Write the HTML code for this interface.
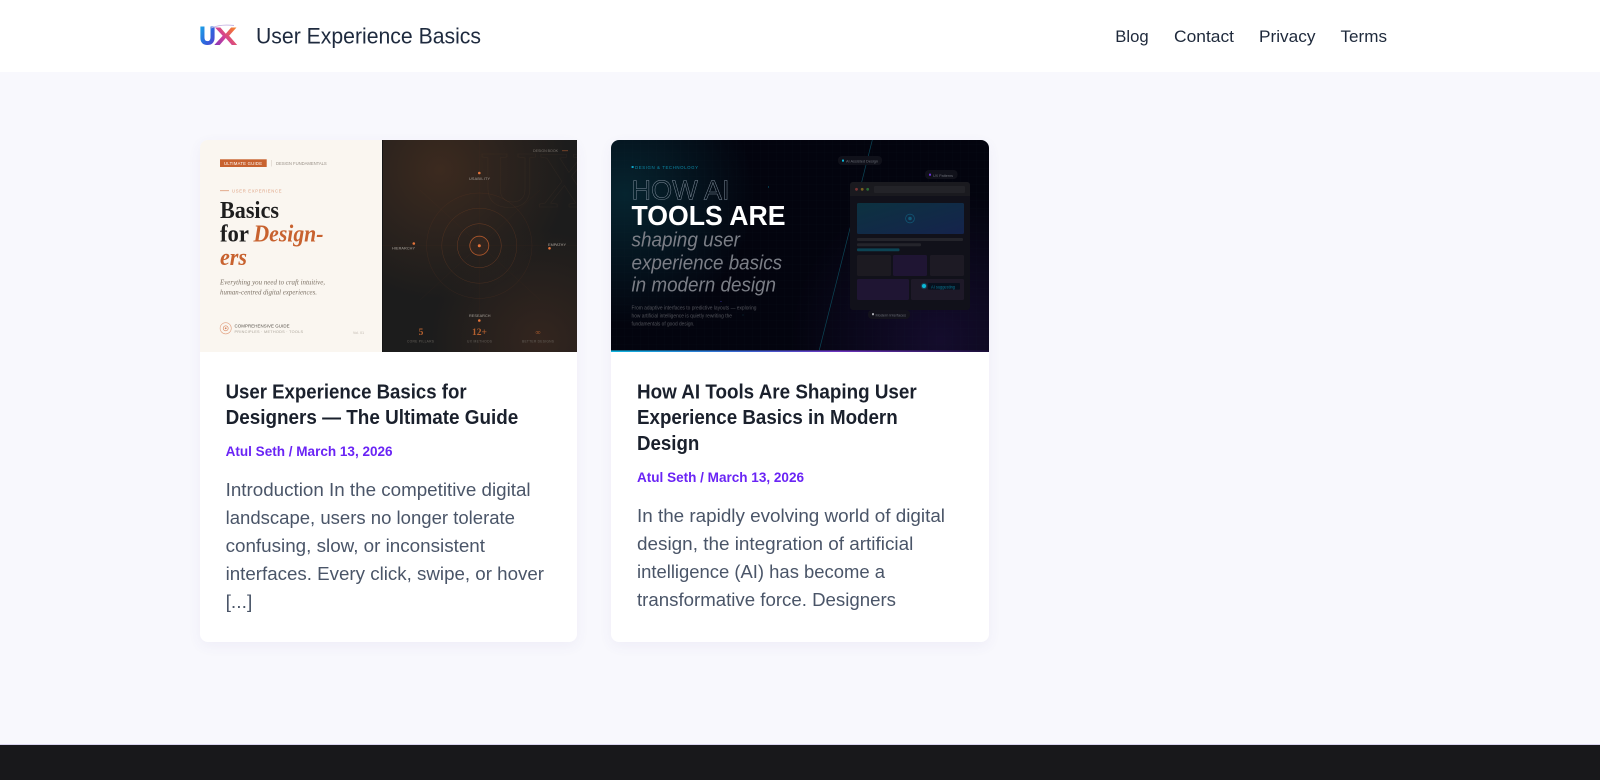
<!DOCTYPE html>
<html lang="en">
<head>
<meta charset="utf-8">
<title>User Experience Basics</title>
<style>
html,body{margin:0;padding:0;width:1600px;height:780px;overflow:hidden;background:#f8f8fd;font-family:"Liberation Sans",sans-serif}
.hd{position:absolute;left:0;top:0;width:1600px;height:72px;background:#fff}
.card{position:absolute;top:140px;height:502px;background:#fff;border-radius:8px;box-shadow:0 4px 14px rgba(80,70,160,.06)}
.ft{position:absolute;left:0;top:744px;width:1600px;height:36px;background:#18181b;border-top:1px solid #d9d4ee;box-sizing:border-box}
svg{position:absolute;left:0;top:0}
text{font-family:"Liberation Sans",sans-serif}
.s{font-family:"Liberation Serif",serif}
.nav{font-size:16.6px;fill:#1e293b}
.t{font-size:20.6px;font-weight:700;fill:#1a202c}
.m{font-size:13.4px;font-weight:700;fill:#6a24f5}
.e{font-size:18px;fill:#4a5568}
.b{filter:blur(.35px)}
</style>
</head>
<body>
<div class="hd"></div>
<div class="card" style="left:200px;width:377px"></div>
<div class="card" style="left:611px;width:378px"></div>
<div class="ft"></div>
<svg width="1600" height="780" viewBox="0 0 1600 780" xmlns="http://www.w3.org/2000/svg">
<defs>
<linearGradient id="lu" x1="0" y1="0" x2="1" y2="1">
<stop offset="0" stop-color="#18b0e8"/><stop offset=".55" stop-color="#2f62dc"/><stop offset="1" stop-color="#6a35c8"/>
</linearGradient>
<linearGradient id="lx" x1="0" y1="1" x2="1" y2="0">
<stop offset="0" stop-color="#6a35c8"/><stop offset=".45" stop-color="#d23f96"/><stop offset=".75" stop-color="#f0703f"/><stop offset="1" stop-color="#f7a72a"/>
</linearGradient>
<clipPath id="c1"><path d="M200 352V148a8 8 0 0 1 8-8H577V352Z"/></clipPath>
<clipPath id="c1b"><path d="M382 352V140H569a8 8 0 0 1 8 8V352Z"/></clipPath>
<clipPath id="c2"><path d="M611 352V148a8 8 0 0 1 8-8H981a8 8 0 0 1 8 8V352Z"/></clipPath>
<radialGradient id="br1" gradientUnits="userSpaceOnUse" cx="440" cy="170" r="130"><stop offset="0" stop-color="#3c2a1f"/><stop offset="1" stop-color="#3c2a1f" stop-opacity="0"/></radialGradient>
<radialGradient id="br2" gradientUnits="userSpaceOnUse" cx="540" cy="340" r="110"><stop offset="0" stop-color="#33251e"/><stop offset="1" stop-color="#33251e" stop-opacity="0"/></radialGradient>
<radialGradient id="te" gradientUnits="userSpaceOnUse" cx="625" cy="195" r="130"><stop offset="0" stop-color="#06242f"/><stop offset="1" stop-color="#06242f" stop-opacity="0"/></radialGradient>
<radialGradient id="pu" gradientUnits="userSpaceOnUse" cx="940" cy="340" r="150"><stop offset="0" stop-color="#140c2c"/><stop offset="1" stop-color="#140c2c" stop-opacity="0"/></radialGradient>
<linearGradient id="acc" x1="0" x2="1"><stop offset="0" stop-color="#0fb4de"/><stop offset=".35" stop-color="#3a63d0"/><stop offset=".6" stop-color="#6d34c0"/><stop offset="1" stop-color="#1a0e38"/></linearGradient>
<linearGradient id="hero" x1="0" x2="1" y1="0" y2="1"><stop offset="0" stop-color="#0c3240"/><stop offset="1" stop-color="#15234c"/></linearGradient>
<pattern id="grid" width="8" height="8" patternUnits="userSpaceOnUse"><path d="M8 0H0V8" fill="none" stroke="#1a2a3c" stroke-width=".4" opacity=".22"/></pattern>
</defs>

<!-- Header -->
<text x="199.5" y="44.6" font-size="25" font-weight="700" fill="url(#lu)" stroke="url(#lu)" stroke-width="1" textLength="16" lengthAdjust="spacingAndGlyphs">U</text>
<text x="214" y="44.8" font-size="25" font-weight="700" fill="url(#lx)" textLength="23.5" lengthAdjust="spacingAndGlyphs">X</text>
<path d="M211 28C218 25 226 24.5 234 25.5" fill="none" stroke="#c5b3e2" stroke-width=".9"/>
<text x="256" y="43.3" font-size="22" fill="#1e2a3e" textLength="225" lengthAdjust="spacingAndGlyphs">User Experience Basics</text>
<text class="nav" x="1115.3" y="42" textLength="33.4" lengthAdjust="spacingAndGlyphs">Blog</text>
<text class="nav" x="1174" y="42" textLength="60" lengthAdjust="spacingAndGlyphs">Contact</text>
<text class="nav" x="1259" y="42" textLength="56.5" lengthAdjust="spacingAndGlyphs">Privacy</text>
<text class="nav" x="1340.5" y="42" textLength="46.5" lengthAdjust="spacingAndGlyphs">Terms</text>

<!-- Thumbnail 1 -->
<g clip-path="url(#c1)"><g class="b">
<rect x="198" y="138" width="185" height="216" fill="#faf6f0"/>
<rect x="382" y="138" width="198" height="216" fill="#1c1c1c"/>
<rect x="382" y="138" width="198" height="216" fill="url(#br1)"/>
<rect x="382" y="138" width="198" height="216" fill="url(#br2)"/>
<rect x="220" y="159.3" width="46.7" height="7.7" fill="#c8622f"/>
<text x="224" y="165" font-size="4.2" fill="#fff" textLength="38" lengthAdjust="spacing">ULTIMATE GUIDE</text>
<rect x="271" y="160" width=".6" height="6.5" fill="#d8d0c6"/>
<text x="276" y="165" font-size="4.2" fill="#9a9289" textLength="50.7" lengthAdjust="spacing">DESIGN FUNDAMENTALS</text>
<rect x="220" y="190.4" width="9" height=".7" fill="#d88a60"/>
<text x="232" y="192.6" font-size="4.2" fill="#dfa283" textLength="49.5" lengthAdjust="spacing">USER EXPERIENCE</text>
<text class="s" x="220" y="218" font-size="24" font-weight="700" fill="#1e1e1e" textLength="59" lengthAdjust="spacingAndGlyphs">Basics</text>
<text class="s" x="220" y="241.7" font-size="24" font-weight="700" fill="#1e1e1e" textLength="29" lengthAdjust="spacingAndGlyphs">for</text>
<text class="s" x="253.5" y="241.7" font-size="24" font-weight="700" font-style="italic" fill="#c8622f" textLength="70" lengthAdjust="spacingAndGlyphs">Design-</text>
<text class="s" x="220" y="265" font-size="24" font-weight="700" font-style="italic" fill="#c8622f" textLength="27" lengthAdjust="spacingAndGlyphs">ers</text>
<text class="s" x="220" y="284.3" font-size="7" font-style="italic" fill="#7f7468" textLength="105" lengthAdjust="spacingAndGlyphs">Everything you need to craft intuitive,</text>
<text class="s" x="220" y="294.7" font-size="7" font-style="italic" fill="#7f7468" textLength="97" lengthAdjust="spacingAndGlyphs">human-centred digital experiences.</text>
<circle cx="225.7" cy="328.3" r="5.6" fill="none" stroke="#e2a080" stroke-width=".6"/>
<circle cx="225.7" cy="328.3" r="2.5" fill="none" stroke="#d9825a" stroke-width=".6"/>
<circle cx="225.7" cy="328.3" r=".9" fill="#d9825a"/>
<text x="234.5" y="327.4" font-size="4.4" fill="#555049" textLength="55" lengthAdjust="spacing">COMPREHENSIVE GUIDE</text>
<text x="234.5" y="333.2" font-size="3.8" fill="#aaa399" textLength="68.5" lengthAdjust="spacing">PRINCIPLES · METHODS · TOOLS</text>
<text x="353" y="334" font-size="3.4" fill="#bdb6ac" textLength="11" lengthAdjust="spacing">Vol. 01</text>
<rect x="382" y="138" width="1" height="216" fill="#141414"/>
<g clip-path="url(#c1b)">
<text class="s" x="480" y="207" font-size="80" font-weight="700" fill="none" stroke="#d9904f" stroke-opacity=".07" stroke-width=".6">UX</text>
<g fill="none" stroke="#c8622f">
<path d="M479.3 140V352M382 245.7H578M420 190L540 300M540 190L420 300" stroke-width=".3" opacity=".1"/>
<circle cx="479.3" cy="245.7" r="52.7" stroke-width=".4" opacity=".16"/>
<circle cx="479.3" cy="245.7" r="37.5" stroke-width=".4" opacity=".28"/>
<circle cx="479.3" cy="245.7" r="22" stroke-width=".5" opacity=".42"/>
<circle cx="479.3" cy="245.7" r="9.5" stroke-width=".8" opacity=".85" fill="#c8622f" fill-opacity=".08"/>
</g>
<circle cx="479.3" cy="245.7" r="1.5" fill="#e8753a"/>
<g fill="#e8753a">
<circle cx="479.3" cy="173" r="1.3"/><circle cx="413.8" cy="243.5" r="1.3"/><circle cx="549.5" cy="248.3" r="1.3"/><circle cx="479.3" cy="320.5" r="1.3"/>
</g>
<g font-size="3.8" fill="#a8a29a">
<text x="469" y="179.8" textLength="21" lengthAdjust="spacing">USABILITY</text>
<text x="392" y="249.6" textLength="23" lengthAdjust="spacing">HIERARCHY</text>
<text x="548" y="245.9" textLength="18" lengthAdjust="spacing">EMPATHY</text>
<text x="469" y="317" textLength="21.5" lengthAdjust="spacing">RESEARCH</text>
</g>
<text x="533" y="152" font-size="3.6" fill="#77716a" textLength="25" lengthAdjust="spacing">DESIGN BOOK</text>
<rect x="562" y="150.5" width="6" height=".6" fill="#a85a30"/>
<g font-size="9.5" fill="#b5602f" text-anchor="middle">
<text class="s" x="421" y="335" font-weight="700">5</text>
<text class="s" x="479.5" y="335" font-weight="700">12+</text>
<text class="s" x="538" y="334.5" font-size="7">∞</text>
</g>
<g font-size="3.3" fill="#66615b">
<text x="407" y="342.7" textLength="27" lengthAdjust="spacing">CORE PILLARS</text>
<text x="467" y="342.7" textLength="25" lengthAdjust="spacing">UX METHODS</text>
<text x="522" y="342.7" textLength="32" lengthAdjust="spacing">BETTER DESIGNS</text>
</g>
</g>
</g></g>

<!-- Thumbnail 2 -->
<g clip-path="url(#c2)"><g class="b">
<rect x="609" y="138" width="382" height="216" fill="#03040e"/>
<rect x="609" y="138" width="382" height="216" fill="url(#te)"/>
<rect x="609" y="138" width="382" height="216" fill="url(#pu)"/>
<rect x="609" y="138" width="382" height="216" fill="url(#grid)"/>
<path d="M872.3 140L819.3 350" stroke="#0c4556" stroke-width=".7" fill="none"/>
<rect x="631.6" y="166" width="2" height="2" fill="#0ea5c9"/>
<text x="635" y="169" font-size="4.4" fill="#0c88a6" textLength="63" lengthAdjust="spacing">DESIGN &amp; TECHNOLOGY</text>
<text x="631.5" y="199.3" font-size="28" fill="none" stroke="#7f8c9a" stroke-width=".5" textLength="98" lengthAdjust="spacingAndGlyphs">HOW AI</text>
<text x="631.5" y="225" font-size="28" font-weight="700" fill="#fff" textLength="154" lengthAdjust="spacingAndGlyphs">TOOLS ARE</text>
<text x="631.5" y="246.7" font-size="20.3" font-style="italic" fill="#7b7e86" textLength="108.5" lengthAdjust="spacingAndGlyphs">shaping user</text>
<text x="631.5" y="269.3" font-size="20.3" font-style="italic" fill="#7b7e86" textLength="150.5" lengthAdjust="spacingAndGlyphs">experience basics</text>
<text x="631.5" y="291.7" font-size="20.3" font-style="italic" fill="#7b7e86" textLength="144.5" lengthAdjust="spacingAndGlyphs">in modern design</text>
<g font-size="5" fill="#53555c">
<text x="631.5" y="309.3" textLength="125" lengthAdjust="spacingAndGlyphs">From adaptive interfaces to predictive layouts — exploring</text>
<text x="631.5" y="317.4" textLength="100.5" lengthAdjust="spacingAndGlyphs">how artificial intelligence is quietly rewriting the</text>
<text x="631.5" y="325.6" textLength="63" lengthAdjust="spacingAndGlyphs">fundamentals of good design.</text>
</g>
<circle cx="768.5" cy="187" r=".5" fill="#0c88a6"/><circle cx="721" cy="301.5" r=".5" fill="#3a30b0"/><circle cx="743" cy="315" r=".4" fill="#0c6a80"/>

<!-- Browser mock -->
<rect x="850" y="182" width="120" height="128" rx="3" fill="#11111a"/>
<path d="M850 196V185a3 3 0 0 1 3-3H967a3 3 0 0 1 3 3V196Z" fill="#1a1a1f"/>
<circle cx="856.5" cy="189.3" r="1.4" fill="#7a3434"/><circle cx="862.2" cy="189.3" r="1.4" fill="#766020"/><circle cx="867.7" cy="189.3" r="1.4" fill="#2a6a34"/>
<rect x="874" y="186" width="91" height="7" rx="1" fill="#232328"/>
<rect x="857" y="203" width="107" height="31" rx="1.5" fill="url(#hero)"/>
<circle cx="910" cy="218.5" r="4.4" fill="none" stroke="#125a78" stroke-width=".7"/><circle cx="910" cy="218.5" r="1.8" fill="#125a78"/>
<rect x="857" y="238" width="106" height="3" rx="1" fill="#24242b"/>
<rect x="857" y="243.3" width="64" height="3" rx="1" fill="#24242b"/>
<rect x="857" y="248.4" width="42.5" height="2.8" rx="1" fill="#0c4454"/>
<rect x="857" y="255" width="34" height="21" rx="1.5" fill="#1c1a21"/>
<rect x="893" y="255" width="34" height="21" rx="1.5" fill="#1f1533"/>
<rect x="930" y="255" width="34" height="21" rx="1.5" fill="#1d1a24"/>
<rect x="857" y="279" width="52" height="21" rx="1.5" fill="#1f1533"/>
<rect x="911" y="279" width="53" height="21" rx="1.5" fill="#1e1928"/>
<circle cx="924" cy="286" r="3.2" fill="#06b6d4" opacity=".25"/><circle cx="924" cy="286" r="2" fill="#0cb8d8"/>
<rect x="928" y="283" width="32" height="6.6" rx="1" fill="#07101d"/>
<text x="931" y="288.4" font-size="4.4" fill="#0a7a96" textLength="24" lengthAdjust="spacingAndGlyphs">AI suggesting</text>
<!-- Pills -->
<rect x="838" y="156" width="44" height="9" rx="4" fill="#10111a"/>
<rect x="842" y="159.6" width="2" height="2" fill="#0cb8d8"/>
<text x="846" y="162.5" font-size="4" fill="#6a6d76" textLength="32" lengthAdjust="spacingAndGlyphs">AI Assisted Design</text>
<rect x="925" y="170" width="32.5" height="9" rx="4" fill="#10111a"/>
<rect x="929" y="173.7" width="2" height="2" fill="#6a30d8"/>
<text x="933" y="177" font-size="4" fill="#6a6d76" textLength="20" lengthAdjust="spacingAndGlyphs">UX Patterns</text>
<rect x="868" y="310" width="42" height="9" rx="4" fill="#13121c"/>
<rect x="872" y="313.2" width="2" height="2" fill="#a8a8b0"/>
<text x="875.5" y="316.5" font-size="4" fill="#6a6d76" textLength="30.5" lengthAdjust="spacingAndGlyphs">Modern Interfaces</text>
</g>
<rect x="611" y="350.4" width="378" height="1.6" fill="url(#acc)"/>
</g>

<!-- Card 1 text -->
<text class="t" x="225.6" y="398.3" textLength="241" lengthAdjust="spacingAndGlyphs">User Experience Basics for</text>
<text class="t" x="225.6" y="424" textLength="292.7" lengthAdjust="spacingAndGlyphs">Designers — The Ultimate Guide</text>
<text class="m" x="225.6" y="456" textLength="167" lengthAdjust="spacingAndGlyphs">Atul Seth / March 13, 2026</text>
<text class="e" x="225.6" y="496" textLength="305" lengthAdjust="spacingAndGlyphs">Introduction In the competitive digital</text>
<text class="e" x="225.6" y="524" textLength="289.4" lengthAdjust="spacingAndGlyphs">landscape, users no longer tolerate</text>
<text class="e" x="225.6" y="552" textLength="259.4" lengthAdjust="spacingAndGlyphs">confusing, slow, or inconsistent</text>
<text class="e" x="225.6" y="580" textLength="318.4" lengthAdjust="spacingAndGlyphs">interfaces. Every click, swipe, or hover</text>
<text class="e" x="225.6" y="608" textLength="26.7" lengthAdjust="spacingAndGlyphs">[...]</text>

<!-- Card 2 text -->
<text class="t" x="637" y="398.3" textLength="279.7" lengthAdjust="spacingAndGlyphs">How AI Tools Are Shaping User</text>
<text class="t" x="637" y="424" textLength="260.7" lengthAdjust="spacingAndGlyphs">Experience Basics in Modern</text>
<text class="t" x="637" y="450" textLength="62.3" lengthAdjust="spacingAndGlyphs">Design</text>
<text class="m" x="637" y="482" textLength="167" lengthAdjust="spacingAndGlyphs">Atul Seth / March 13, 2026</text>
<text class="e" x="637" y="522" textLength="308" lengthAdjust="spacingAndGlyphs">In the rapidly evolving world of digital</text>
<text class="e" x="637" y="550" textLength="276.3" lengthAdjust="spacingAndGlyphs">design, the integration of artificial</text>
<text class="e" x="637" y="578" textLength="248" lengthAdjust="spacingAndGlyphs">intelligence (AI) has become a</text>
<text class="e" x="637" y="606" textLength="259" lengthAdjust="spacingAndGlyphs">transformative force. Designers</text>
</svg>
</body>
</html>
